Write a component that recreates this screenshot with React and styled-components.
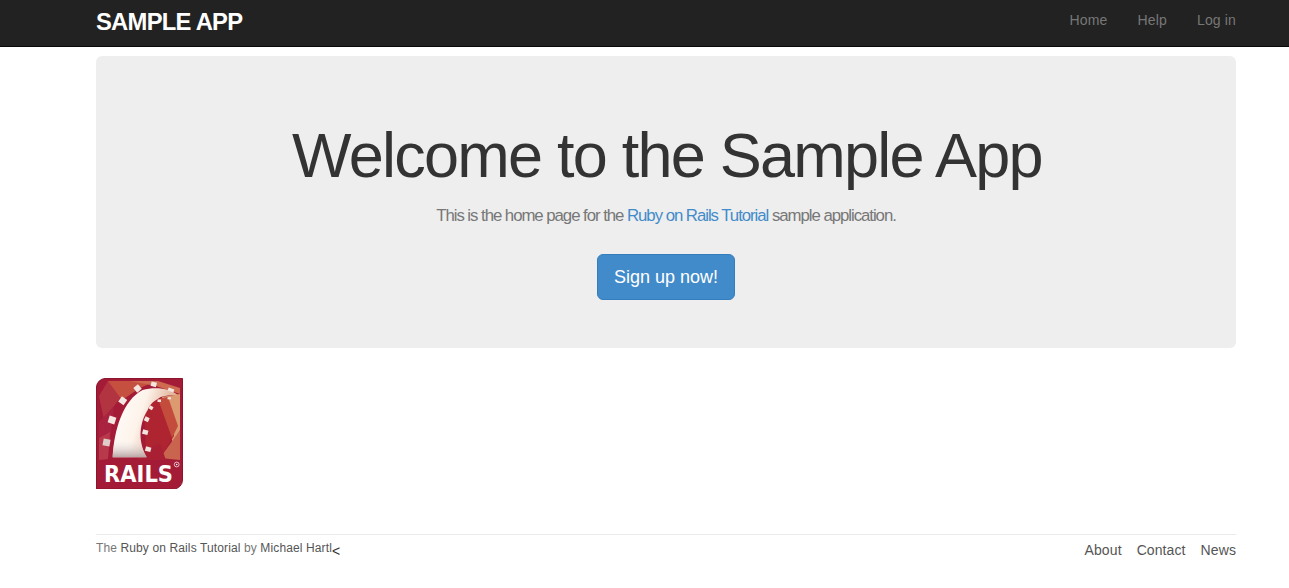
import React from "react";
import styled, { createGlobalStyle } from "styled-components";

const GlobalStyle = createGlobalStyle`
  html, body {
    margin: 0;
    padding: 0;
    background: #fff;
  }
  body {
    font-family: "Liberation Sans", Arial, sans-serif;
    font-size: 14px;
    line-height: 20px;
    color: #333;
  }
  * {
    box-sizing: border-box;
  }
  a {
    text-decoration: none;
  }
`;

const Header = styled.header`
  height: 47px;
  background: #222;
  border-bottom: 1px solid #080808;
`;

const Container = styled.div`
  width: 1140px;
  margin-left: 96px;
  display: ${(p) => (p.$bar ? "flex" : "block")};
  justify-content: space-between;
`;

const Logo = styled.a`
  color: #fff;
  font-size: 23.8px;
  font-weight: bold;
  letter-spacing: -0.75px;
  line-height: 26px;
  text-transform: uppercase;
  padding-top: 9px;
`;

const NavList = styled.ul`
  display: flex;
  gap: 30px;
  list-style: none;
  margin: 0;
  padding: 0;
`;

const NavLink = styled.a`
  display: block;
  color: #777;
  letter-spacing: 0.15px;
  padding: 10px 0 16px;
`;

const Hero = styled.section`
  margin-top: 9px;
  height: 292px;
  padding: 65px 60px 0;
  background: #eee;
  border-radius: 6px;
  text-align: center;
`;

const Title = styled.h1`
  margin: 0 0 17px;
  padding-left: 2px;
  color: #333;
  font-size: 63px;
  font-weight: 500;
  letter-spacing: -1.76px;
  line-height: 69px;
`;

const Subtitle = styled.h2`
  margin: 0 0 29px;
  color: #777;
  font-size: 16.8px;
  font-weight: normal;
  letter-spacing: -1.04px;
  line-height: 18px;
`;

const BlueLink = styled.a`
  color: #428bca;
`;

const SignUp = styled.a`
  display: inline-block;
  padding: 10px 16px;
  background: #428bca;
  border: 1px solid #357ebd;
  border-radius: 6px;
  color: #fff;
  font-size: 18px;
  line-height: 24px;
`;

const LogoLink = styled.a`
  display: block;
  width: 87px;
  height: 111px;
  margin-top: 30px;
`;

const Footer = styled.footer`
  margin-top: 45px;
  padding-top: 5px;
  border-top: 1px solid #eaeaea;
  color: #777;
  display: flex;
  justify-content: space-between;
`;

const Credit = styled.div`
  padding-top: 1px;
  color: #333;
`;

const Small = styled.small`
  color: #777;
  font-size: 12px;
  letter-spacing: 0.12px;
  line-height: 14px;
  vertical-align: 4px;
`;

const FooterLink = styled.a`
  color: #555;
`;

const FooterList = styled.ul`
  display: flex;
  gap: 15px;
  letter-spacing: 0.1px;
  list-style: none;
  margin: 0;
  padding: 0;
`;

const RailsLogo = () => (
  <svg width="87" height="111" viewBox="0 0 87 111">
    <defs>
      <linearGradient id="arch" x1="0" y1="0" x2="1" y2="0.35">
        <stop offset="0" stopColor="#ffffff" />
        <stop offset="0.5" stopColor="#fdf3ea" />
        <stop offset="1" stopColor="#d79a7c" />
      </linearGradient>
      <linearGradient id="archShade" x1="0" y1="0" x2="0" y2="1">
        <stop offset="0" stopColor="#fff" stopOpacity="0" />
        <stop offset="1" stopColor="#b9a5a5" />
      </linearGradient>
    </defs>
    <path d="M9 0.5H86.5V102a9 9 0 0 1-9 9H0.5V9a9 9 0 0 1 8.5-8.5z" fill="#a31b36" stroke="#8a152c" />
    <polygon points="3,18 12,3 34,3 24,20 8,42" fill="#b33441" />
    <polygon points="12,3 60,3 44,10 26,22" fill="#c5503f" />
    <polygon points="34,3 62,3 84,10 84,16 60,8" fill="#cd6a50" />
    <polygon points="66,19 84,16 84,52 77,66" fill="#db9a70" />
    <polygon points="3,44 18,28 14,62 12,81 3,82" fill="#a92340" />
    <polygon points="3,60 14,54 12,81 3,82" fill="#b8394a" />
    <polygon points="48,28 60,22 70,20 78,58 64,80 50,80" fill="#ae2431" />
    <polygon points="62,21 72,19 82,48 76,60" fill="#c44c3d" />
    <polygon points="64,80 77,62 84,52 84,82" fill="#c9644e" />
    <polygon points="42,74 64,66 70,82 42,82" fill="#a91f33" />
    <path
      d="M16.7 79.3C18 52 27 22 46.7 12 60 8 75 11 81.7 17 72 17 65 18 61.7 21 56 24 53 28 51.7 32 44 44 41 62 50.7 79.3z"
      fill="url(#arch)"
    />
    <path d="M16.7 79.3C17 72 18 66 19 60H44C45 67 47 73 50.7 79.3z" fill="url(#archShade)" />
    <g fill="#f3e6e0">
      <rect x="7" y="61" width="7" height="7" transform="rotate(10 10.7 64.7)" fill="#dfcdca" />
      <rect x="12.5" y="38.5" width="7" height="7" transform="rotate(18 16 42)" />
      <rect x="23.5" y="19.5" width="6.5" height="6.5" transform="rotate(35 26.7 22.7)" />
      <rect x="38.7" y="7.5" width="6" height="6" transform="rotate(50 41.7 10.3)" />
      <rect x="55" y="4" width="5.5" height="4.5" transform="rotate(15 57.7 6.3)" />
      <rect x="72" y="10.5" width="6" height="3" transform="rotate(20 75 12)" />
      <rect x="49.5" y="69" width="5.5" height="4.5" transform="rotate(15 52.3 71)" />
      <rect x="46.5" y="52" width="5.5" height="4.5" transform="rotate(15 49.3 54.3)" />
      <rect x="48.5" y="39" width="4.5" height="4.5" transform="rotate(25 50.7 41.3)" />
      <rect x="53" y="28" width="4" height="3.5" transform="rotate(30 55 29.7)" />
      <rect x="61.5" y="21.5" width="3.5" height="2.5" />
      <rect x="71.5" y="19.3" width="3.5" height="2" />
    </g>
    <text
      x="8"
      y="103.5"
      fill="#fff"
      fontFamily="'DejaVu Sans', sans-serif"
      fontSize="23"
      fontWeight="bold"
      textLength="69"
      lengthAdjust="spacingAndGlyphs"
    >
      RAILS
    </text>
    <circle cx="80.7" cy="86.5" r="2.4" fill="none" stroke="#fff" strokeWidth="0.7" />
    <circle cx="80.7" cy="86.5" r="0.8" fill="#fff" />
  </svg>
);

export default function App() {
  return (
    <>
      <GlobalStyle />
      <Header>
        <Container $bar>
          <Logo href="#">Sample App</Logo>
          <NavList>
            <li><NavLink href="#">Home</NavLink></li>
            <li><NavLink href="#">Help</NavLink></li>
            <li><NavLink href="#">Log in</NavLink></li>
          </NavList>
        </Container>
      </Header>
      <Container>
        <Hero>
          <Title>Welcome to the Sample App</Title>
          <Subtitle>
            This is the home page for the <BlueLink href="#">Ruby on Rails Tutorial</BlueLink> sample application.
          </Subtitle>
          <SignUp href="#">Sign up now!</SignUp>
        </Hero>
        <LogoLink href="#" aria-label="Rails logo">
          <RailsLogo />
        </LogoLink>
        <Footer>
          <Credit>
            <Small>
              The <FooterLink href="#">Ruby on Rails Tutorial</FooterLink> by <FooterLink href="#">Michael Hartl</FooterLink>
            </Small>
            {"<"}
          </Credit>
          <nav>
            <FooterList>
              <li><FooterLink href="#">About</FooterLink></li>
              <li><FooterLink href="#">Contact</FooterLink></li>
              <li><FooterLink href="#">News</FooterLink></li>
            </FooterList>
          </nav>
        </Footer>
      </Container>
    </>
  );
}
